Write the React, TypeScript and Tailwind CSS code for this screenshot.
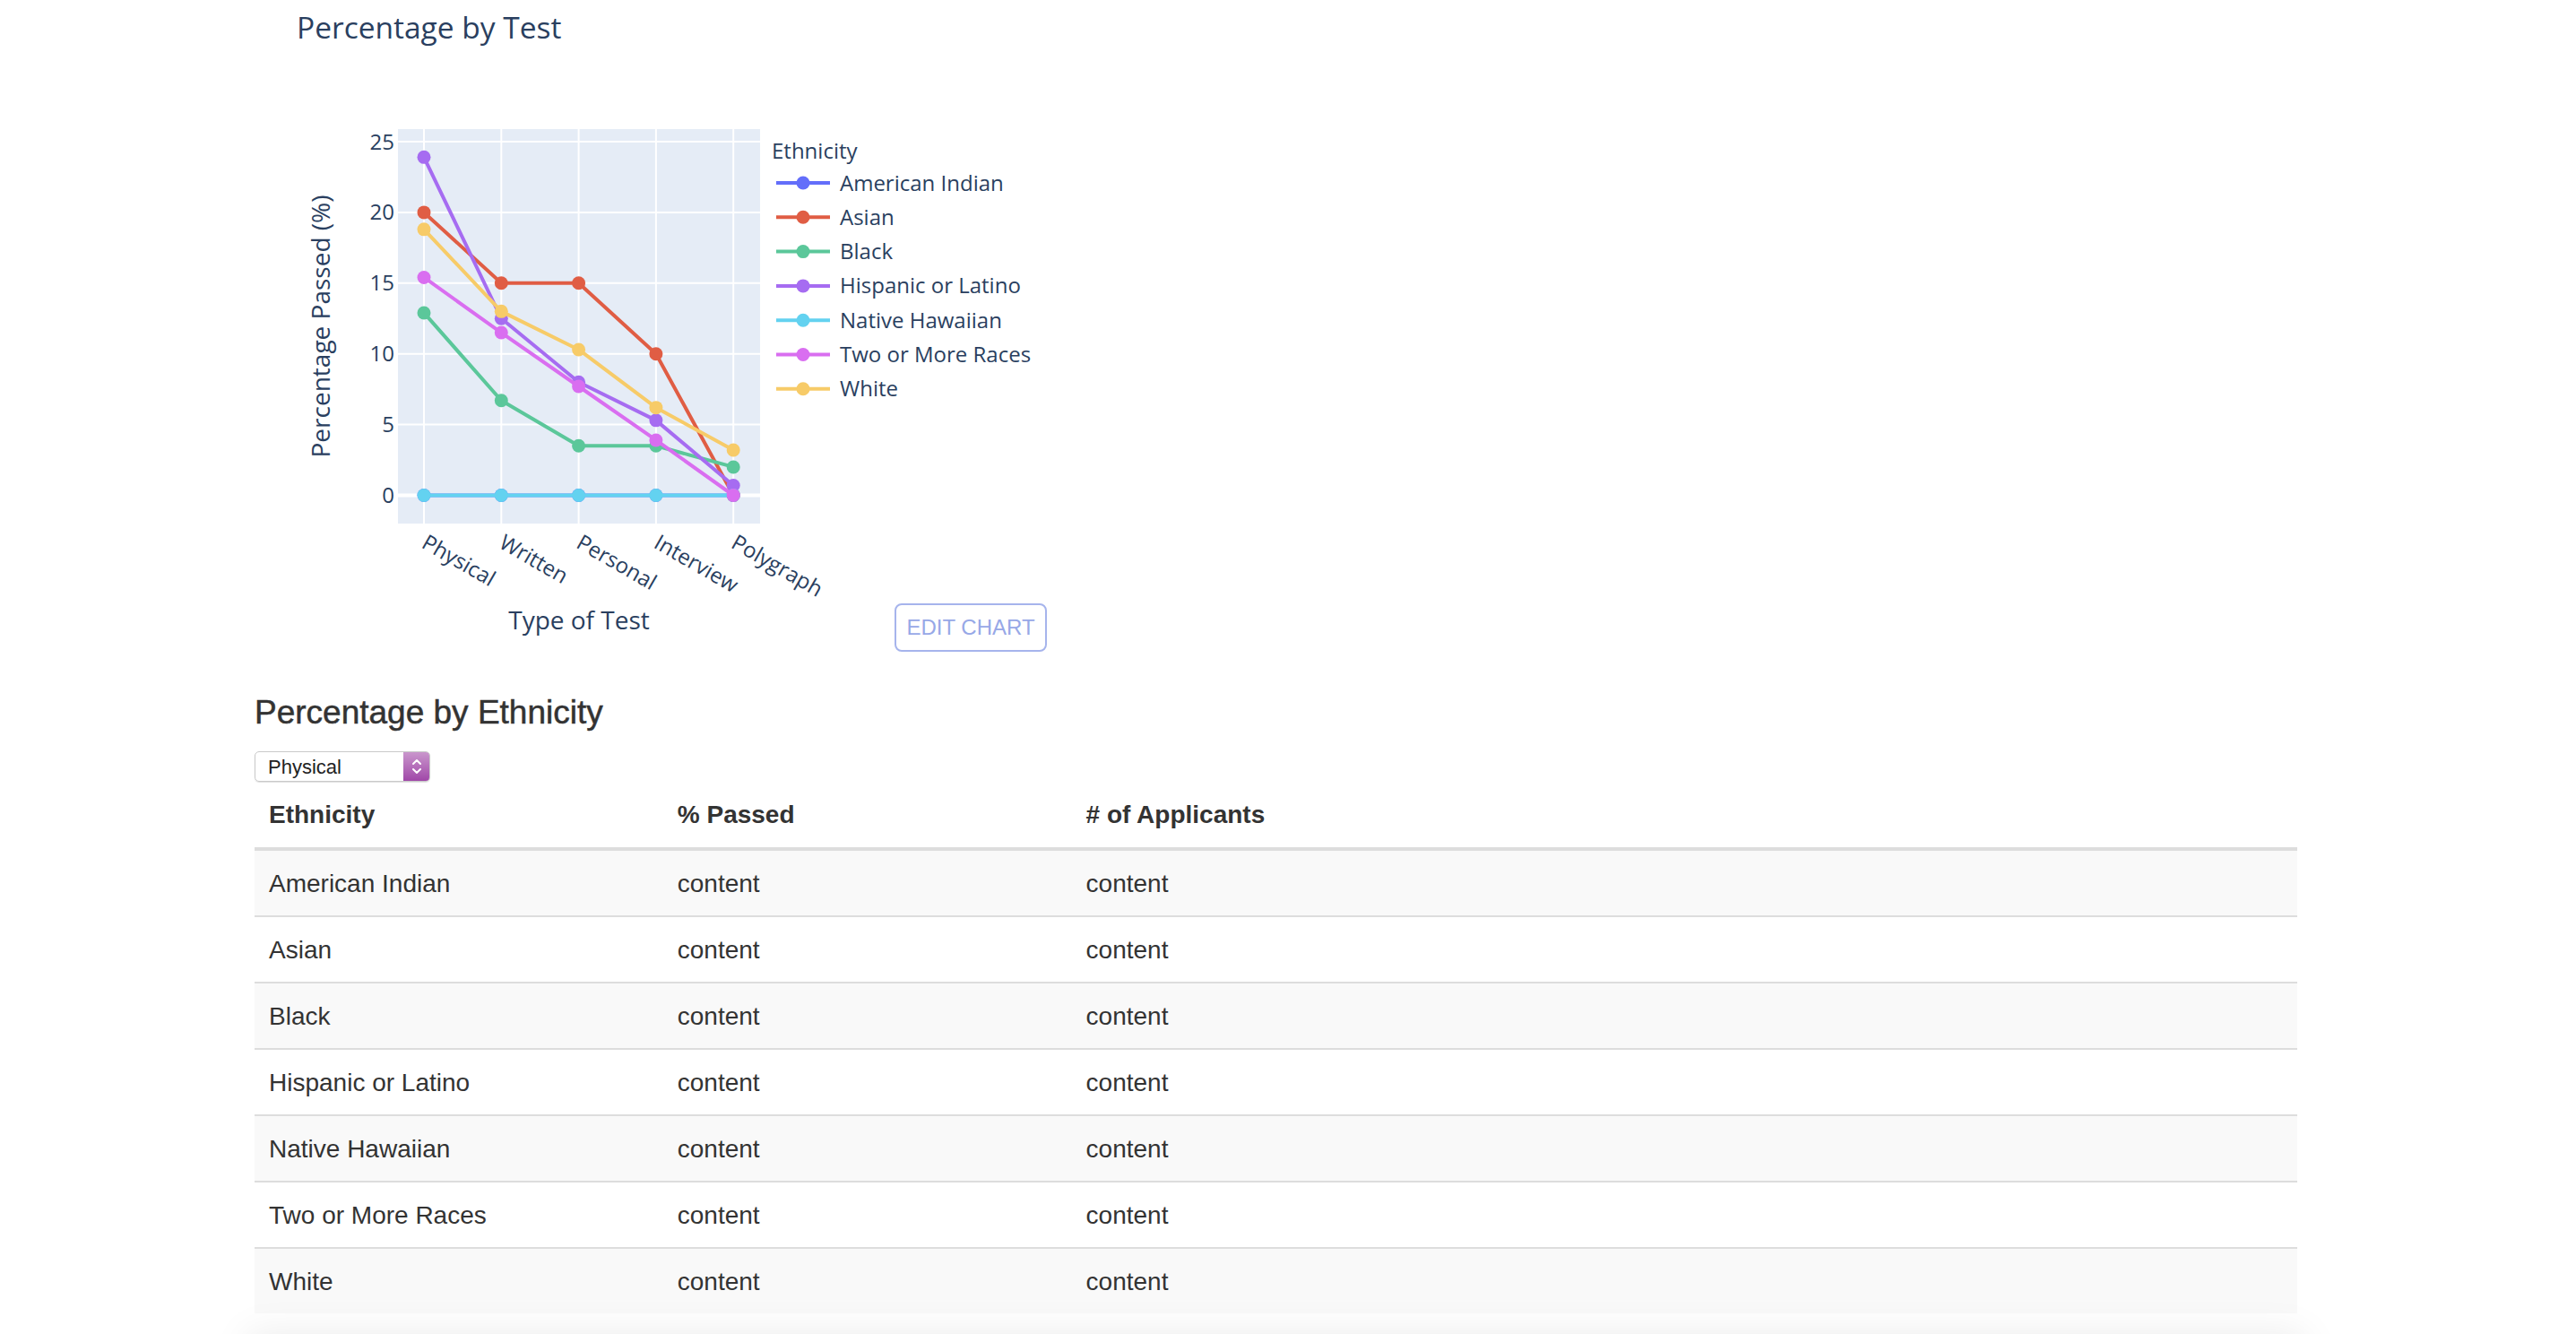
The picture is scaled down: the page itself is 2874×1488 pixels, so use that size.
import React from 'react'

type Series = {
  name: string;
  color: string;
  values: number[];
}

const CATEGORIES = ['Physical', 'Written', 'Personal', 'Interview', 'Polygraph']

const SERIES: Series[] = [
  { name: 'American Indian', color: '#636efa', values: [0, 0, 0, 0, 0] },
  { name: 'Asian', color: '#e05d44', values: [20, 15, 15, 10, 0] },
  { name: 'Black', color: '#5bc79a', values: [12.9, 6.7, 3.5, 3.5, 2.0] },
  { name: 'Hispanic or Latino', color: '#a66cf1', values: [23.9, 12.5, 8.0, 5.3, 0.7] },
  { name: 'Native Hawaiian', color: '#63d2f0', values: [0, 0, 0, 0, 0] },
  { name: 'Two or More Races', color: '#d96ef0', values: [15.4, 11.5, 7.7, 3.9, 0] },
  { name: 'White', color: '#f7cb68', values: [18.8, 13.0, 10.3, 6.2, 3.2] },
]

const ROWS = ['American Indian', 'Asian', 'Black', 'Hispanic or Latino', 'Native Hawaiian', 'Two or More Races', 'White']

const PLOT = { left: 444, top: 144, right: 848, bottom: 584 }
const xOf = (i: number) => 473 + i * 86.3
const yOf = (v: number) => 552.5 - v * 15.78
const FONT = "'Open Sans', verdana, arial, sans-serif"
const INK = '#2a3f5f'

const TestChart = () => {
  return (
    <svg
      className="col-start-1 row-start-1"
      width={884}
      height={727}
      viewBox="284 0 884 727"
      fontFamily={FONT}
      fill={INK}
    >
      <text x={331} y={43} fontSize={33.5}>Percentage by Test</text>

      {/* plot area */}
      <rect x={PLOT.left} y={PLOT.top} width={PLOT.right - PLOT.left} height={PLOT.bottom - PLOT.top} fill="#e5ecf6" />
      {CATEGORIES.map((c, i) => (
        <line key={c} x1={xOf(i)} x2={xOf(i)} y1={PLOT.top} y2={PLOT.bottom} stroke="#fff" strokeWidth={2} />
      ))}
      {[0, 5, 10, 15, 20, 25].map(v => (
        <g key={v}>
          <line x1={PLOT.left} x2={PLOT.right} y1={yOf(v)} y2={yOf(v)} stroke="#fff" strokeWidth={v === 0 ? 4 : 2} />
          <text x={440} y={yOf(v) + 8.5} fontSize={24} textAnchor="end">{v}</text>
        </g>
      ))}

      {SERIES.map(s => (
        <g key={s.name}>
          <polyline
            points={s.values.map((v, i) => `${xOf(i)},${yOf(v)}`).join(' ')}
            fill="none"
            stroke={s.color}
            strokeWidth={4}
            strokeLinejoin="round"
          />
          {s.values.map((v, i) => (
            <circle key={i} cx={xOf(i)} cy={yOf(v)} r={7.5} fill={s.color} />
          ))}
        </g>
      ))}

      {/* axes labels */}
      {CATEGORIES.map((c, i) => (
        <text key={c} x={xOf(i) - 4} y={610} fontSize={24} transform={`rotate(30 ${xOf(i) - 4} 610)`}>{c}</text>
      ))}
      <text x={646} y={702} fontSize={28} textAnchor="middle">Type of Test</text>
      <text x={368} y={364} fontSize={28} textAnchor="middle" transform="rotate(-90 368 364)">Percentage Passed (%)</text>

      {/* legend */}
      <text x={861} y={177} fontSize={24}>Ethnicity</text>
      {SERIES.map((s, i) => {
        const cy = 204 + i * 38.3
        return (
          <g key={s.name}>
            <line x1={866} x2={926} y1={cy} y2={cy} stroke={s.color} strokeWidth={4} />
            <circle cx={896} cy={cy} r={7.5} fill={s.color} />
            <text x={937} y={cy + 8.5} fontSize={24}>{s.name}</text>
          </g>
        )
      })}
    </svg>
  )
}

const App = () => {
  return (
    <div className="min-h-screen bg-white text-[#333] font-['Liberation_Sans',Arial,sans-serif]">
      <div className="ml-[284px] w-[2279px]">
        <div className="grid w-[884px]">
          <TestChart />
          <button className="col-start-1 row-start-1 self-end justify-self-end h-[54px] w-[170px] rounded-[8px] border-2 border-[#a6b4ec] text-[24px] text-[#97a8e7] bg-white">
            EDIT CHART
          </button>
        </div>

        <h4 className="mt-[48px] text-[37px] leading-[40px] font-medium text-[#333] [-webkit-text-stroke:0.5px_#333]">Percentage by Ethnicity</h4>

        <div className="mt-[23px] flex h-[34px] w-[196px] overflow-hidden rounded-[5px] border border-[#c9c9c9] shadow-[0_1px_1px_rgba(0,0,0,0.12)]">
          <div className="flex flex-1 items-center pl-[14px] text-[22px] text-[#222]">Physical</div>
          <div className="flex w-[29px] items-center justify-center bg-linear-to-b from-[#c996cc] to-[#a047a8]">
            <svg width="12" height="20" viewBox="0 0 12 20" fill="none" stroke="#fff" strokeWidth="2" strokeLinecap="round" strokeLinejoin="round">
              <polyline points="2,7 6,3 10,7" />
              <polyline points="2,13 6,17 10,13" />
            </svg>
          </div>
        </div>

        <table className="w-full table-fixed border-collapse text-[28px] leading-[40px]">
          <colgroup>
            <col className="w-[20%]" />
            <col className="w-[20%]" />
            <col className="w-[60%]" />
          </colgroup>
          <thead>
            <tr className="border-b-4 border-[#ddd]">
              <th className="px-[16px] pt-[17px] pb-[16px] text-left font-bold">Ethnicity</th>
              <th className="px-[16px] pt-[17px] pb-[16px] text-left font-bold">% Passed</th>
              <th className="px-[16px] pt-[17px] pb-[16px] text-left font-bold"># of Applicants</th>
            </tr>
          </thead>
          <tbody>
            {ROWS.map((r, i) => (
              <tr key={r} className={i % 2 === 0 ? 'bg-[#f9f9f9]' : 'bg-white'}>
                <td className="border-t-2 border-[#ddd] px-[16px] pt-[17px] pb-[15px]">{r}</td>
                <td className="border-t-2 border-[#ddd] px-[16px] pt-[17px] pb-[15px]">content</td>
                <td className="border-t-2 border-[#ddd] px-[16px] pt-[17px] pb-[15px]">content</td>
              </tr>
            ))}
          </tbody>
        </table>

        <div className="mt-[30px] h-[120px] w-full bg-white shadow-[0_0_40px_8px_rgba(0,0,0,0.08)]" />
      </div>
    </div>
  )
}

export default App
